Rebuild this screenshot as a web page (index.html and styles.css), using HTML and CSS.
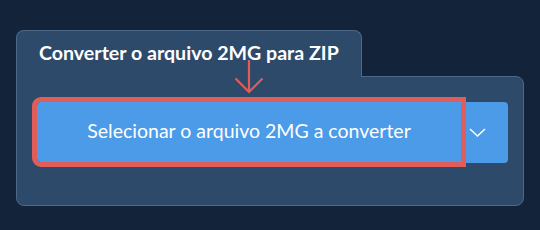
FILE: index.html
```html
<!DOCTYPE html>
<html lang="pt">
<head>
    <meta charset="UTF-8">
    <meta name="viewport" content="width=device-width, initial-scale=1.0">
    <title>Converter 2MG para ZIP</title>
    <link rel="stylesheet" href="styles.css">
</head>
<body>
    <div class="wrap">
        <div class="tab">Converter o arquivo 2MG para ZIP</div>
        <div class="panel">
            <div class="btn-group">
                <button class="btn-main">Selecionar o arquivo 2MG a converter</button>
                <button class="btn-drop">
                    <svg width="17" height="9" viewBox="0 0 17 9"><path d="M1 1 L8.5 8 L16 1" fill="none" stroke="#fff" stroke-width="1.5"/></svg>
                </button>
            </div>
        </div>
        <!-- seta de destaque -->
        <svg class="hint-arrow" width="30" height="36" viewBox="0 0 30 36">
            <path d="M15 0 V32 M1.5 18.5 L15 32 L28.5 18.5" fill="none" stroke="#e05d59" stroke-width="2.2"/>
        </svg>
    </div>
</body>
</html>
```

FILE: styles.css
```css
html, body {
    margin: 0;
    padding: 0;
    background: #12233a;
    font-family: Lato, "Open Sans", sans-serif;
}

.wrap {
    position: relative;
    width: 508px;
    padding: 30px 0 0 16px;
}

.tab {
    position: relative;
    z-index: 1;
    display: inline-block;
    margin-bottom: -1px;
    padding: 11px 22px 13px 22px;
    background: #2d4a6a;
    border: 1px solid #4d6987;
    border-bottom: none;
    border-radius: 8px 8px 0 0;
    color: #fff;
    font-weight: bold;
    font-size: 19.6px;
    line-height: 22px;
}

.panel {
    box-sizing: border-box;
    height: 130px;
    padding: 25px 15px 0 20px;
    background: #2d4a6a;
    border: 1px solid #4d6987;
    border-radius: 0 8px 8px 8px;
}

.btn-group {
    display: flex;
    align-items: flex-start;
}

.btn-main {
    width: 424px;
    height: 60px;
    padding: 0 0 2px 0;
    border: none;
    border-radius: 4px 0 0 4px;
    background: #4c9be8;
    color: #fff;
    font-family: Lato, "Open Sans", sans-serif;
    font-size: 19.5px;
    line-height: 22px;
    outline: 5px solid #e05d59;
    position: relative;
    z-index: 1;
}

.btn-drop {
    display: flex;
    align-items: center;
    justify-content: flex-start;
    width: 47px;
    height: 61px;
    padding: 0 0 0 8px;
    border: none;
    border-radius: 0 4px 4px 0;
    background: #4c9be8;
}

.hint-arrow {
    position: absolute;
    left: 234px;
    top: 60px;
    z-index: 2;
}
```
